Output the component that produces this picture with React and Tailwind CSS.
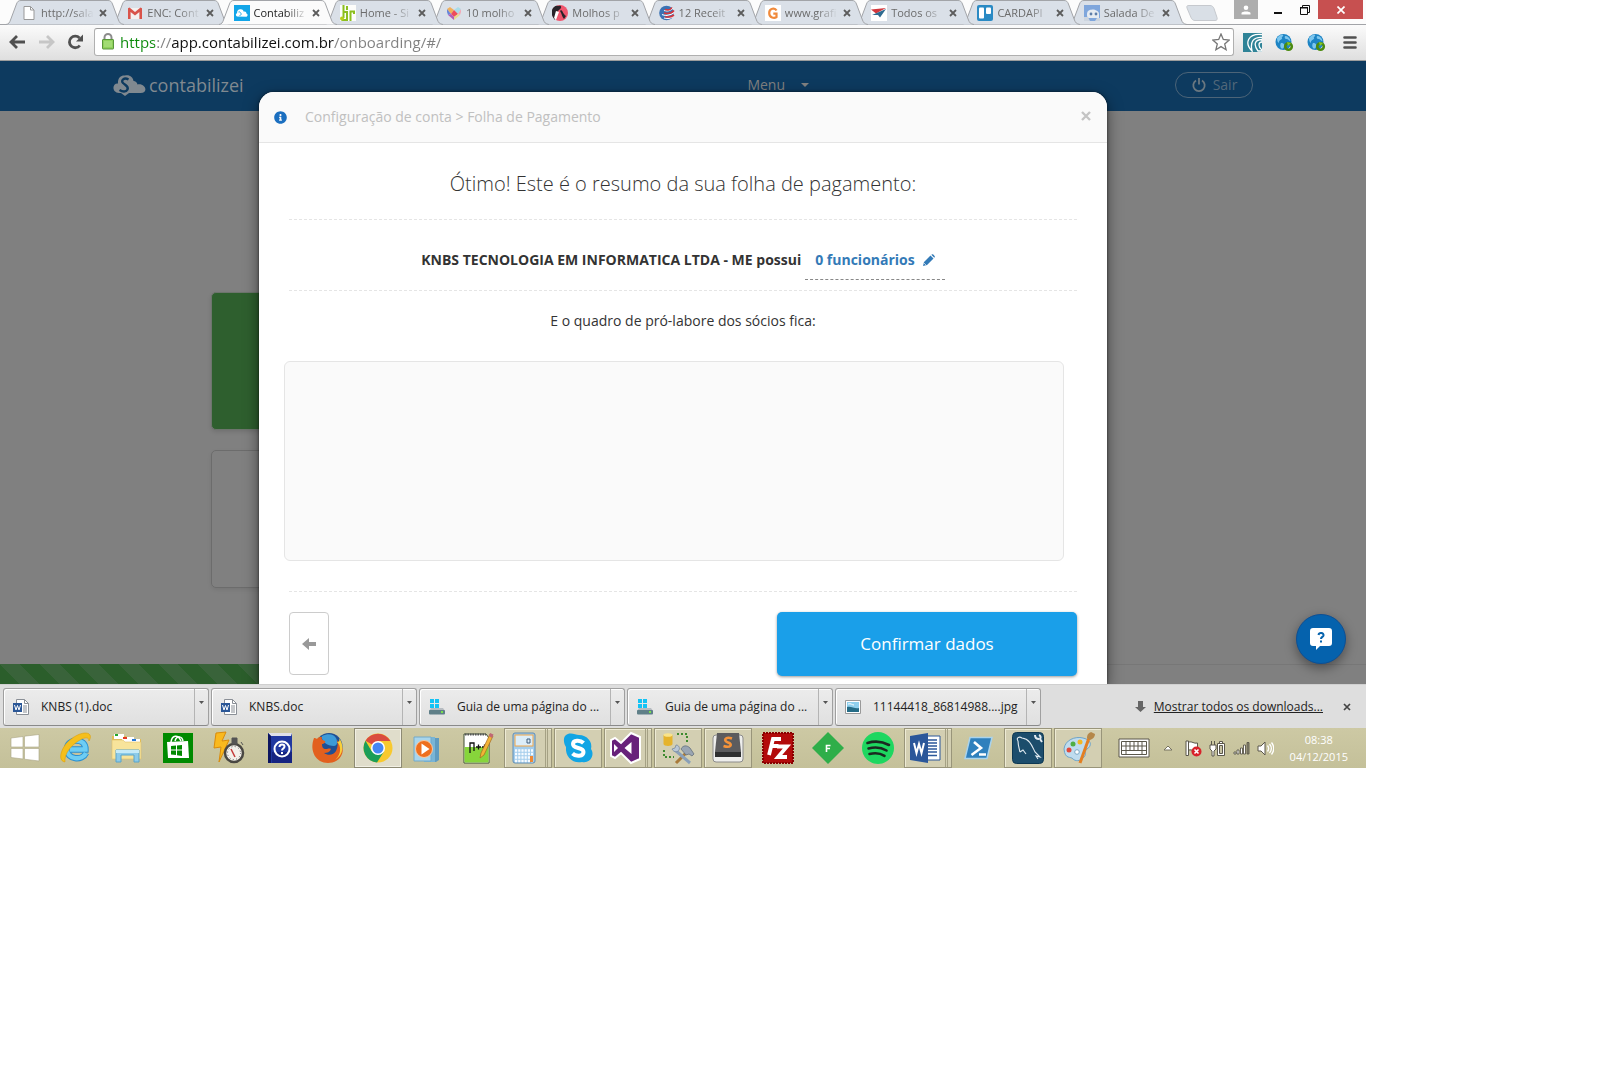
import React from "react";
import { FaInfoCircle } from "react-icons/fa";

/* ---------- favicons ---------- */
const FavPage = () => (
  <svg viewBox="0 0 16 16" className="size-4 shrink-0"><path d="M3 1.5h6.5L13 5v9.500H3z" fill="#fff" stroke="#999" /><path d="M9.500 1.500V5H13" fill="none" stroke="#999" /></svg>
);
const FavGmail = () => (
  <svg viewBox="0 0 16 16" className="size-4 shrink-0"><path d="M1 3h14v11H1z" fill="#f4f1f0" /><path d="M1 3.200v10.800h2.600V7L8 10.600 12.400 7v7H15V3.200L13.500 2.400 8 7 2.500 2.400z" fill="#d9534a" /></svg>
);
const FavCloud = () => (
  <svg viewBox="0 0 16 16" className="size-4 shrink-0"><path d="M0 0h16v16H0z" fill="#12a5e8" /><path d="M3 11.500c-1.500-.5-1.500-3 0-3.300C3 5.500 4.500 4 6.500 4.200 8.500 4 9.500 5.500 9.800 6.700c1.700-.6 2.600.7 2.600 1.700 1.500.2 1.700 2.700.1 3.300z" fill="#fff" /><path d="M4.500 7c2-.8 1.500 1 3 2l-2 2" fill="none" stroke="#12a5e8" strokeWidth=".9" /></svg>
);
const FavHr = () => (
  <svg viewBox="0 0 16 16" className="size-4 shrink-0"><path d="M0 0h16v16H0z" fill="#fdfdfa" /><path d="M3.500 0v13M3.500 7H7v8H1.500M10.500 16V6.500H14V9" fill="none" stroke="#8cbf1f" strokeWidth="2" /><path d="M6 1h2v4H6z" fill="#8cbf1f" /><circle cx="2" cy="13.500" r="2" fill="#b8ce1c" /></svg>
);
const FavHeart = () => (
  <svg viewBox="0 0 16 16" className="size-4 shrink-0">
    <path d="M1 4l3-2 4 3-3 4z" fill="#f2b05b" /><path d="M8 5l4-3 3 2-3 5z" fill="#a9dce8" />
    <path d="M1 4l4 5-3 1-1-3z" fill="#6785d8" /><path d="M5 9l3-4 4 4-4 3z" fill="#ee4c58" />
    <path d="M15 4l-3 5 2 1 1-3z" fill="#f3a9b6" /><path d="M2 10l3-1 3 3v3z" fill="#b55bb5" /><path d="M14 10l-2-1-4 3v3z" fill="#e8d88b" />
  </svg>
);
const FavChef = () => (
  <svg viewBox="0 0 16 16" className="size-4 shrink-0"><circle cx="8" cy="8" r="8" fill="#f0566e" /><path d="M0 5c1-3 4-5 6-4 4-1 4 2 1 4L4 8l-1 7C0 12-1 8 0 5z" fill="#282329" /><path d="M4 6l3 1-3 8-2-2z" fill="#fff" /><path d="M9 5c2 1 2 4 5 6l-2 3c-2-2-2-5-4-8z" fill="#282329" /></svg>
);
const FavGlobeRed = () => (
  <svg viewBox="0 0 16 16" className="size-4 shrink-0"><circle cx="7.500" cy="8" r="7.300" fill="#3a72b4" /><path d="M5 5.500c4 1 7 0 9-2.500M3 9.500c5 2 9 .5 12-2M5 13c4 1 8 0 9-2" stroke="#fff" strokeWidth="1.200" fill="none" /><path d="M6 4.500c3 1 6 0 7-2M5 8c4 1 8 0 10-2.500M6 11.500c3 1 7 0 9-1.500" stroke="#d6373c" strokeWidth="1.600" fill="none" /></svg>
);
const FavG = () => (
  <svg viewBox="0 0 16 16" className="size-4 shrink-0"><path d="M0 0h16v16H0z" fill="#fff" /><path d="M11.500 5.500C10 2.500 4.200 3 4.200 8s5.300 5.500 7.300 4V8.700H8.300" fill="none" stroke="#f08a3c" strokeWidth="2.200" /></svg>
);
const FavWing = () => (
  <svg viewBox="0 0 16 16" className="size-4 shrink-0"><path d="M0 0h16v16H0z" fill="#fff" /><path d="M0 4.500L15 3 5 8.500z" fill="#d2383e" /><path d="M1 10L15 4 9 12.500 7 10z" fill="#2f6b90" /></svg>
);
const FavTrello = () => (
  <svg viewBox="0 0 16 16" className="size-4 shrink-0"><rect width="16" height="16" rx="2" fill="#2a8ac4" /><rect x="2" y="2.500" width="5" height="11" rx="1" fill="#fff" /><rect x="9" y="2.500" width="5" height="6.500" rx="1" fill="#fff" /></svg>
);
const FavBot = () => (
  <svg viewBox="0 0 16 16" className="size-4 shrink-0"><path d="M0 0h16v16H0z" fill="#7fa6dc" /><path d="M3 9c0-4 4-4.500 6-4.500S15 6 15 9v4H5c-2 0-2-2-2-4z" fill="#e6ebf1" /><circle cx="7" cy="9" r="1.400" fill="#5d7da8" /><circle cx="12" cy="9" r="1.400" fill="#5d7da8" /><path d="M0 12h4l2 4H0zM13 13h3v3h-5z" fill="#cdd5df" /></svg>
);

const tabs = [
  { title: "http://sala", Icon: FavPage, z: "z-11" },
  { title: "ENC: Cont", Icon: FavGmail, z: "z-10" },
  { title: "Contabiliz", Icon: FavCloud, z: "z-20", active: true },
  { title: "Home - Si", Icon: FavHr, z: "z-9" },
  { title: "10 molho", Icon: FavHeart, z: "z-8" },
  { title: "Molhos p", Icon: FavChef, z: "z-7" },
  { title: "12 Receit", Icon: FavGlobeRed, z: "z-6" },
  { title: "www.grafi", Icon: FavG, z: "z-5" },
  { title: "Todos os", Icon: FavWing, z: "z-4" },
  { title: "CARDAPI", Icon: FavTrello, z: "z-3" },
  { title: "Salada De", Icon: FavBot, z: "z-2" },
];

function Tab({ title, Icon, z, active }) {
  return (
    <li className={`relative flex h-[25px] min-w-0 flex-1 items-center gap-1 pl-[15px] pr-1 ${z}`}>
      <svg viewBox="0 0 118 25" preserveAspectRatio="none" className="absolute top-0 left-0 -z-10 h-full w-[111%] overflow-visible">
        <path
          d="M0 24.500C3 24 3.500 22.500 4.500 20L10.500 4C11.500 1.500 12.500 .5 15 .5H102C104.500 .5 105.500 1.500 106.500 4L112.500 20C113.500 22.500 114.500 24 118 24.500"
          fill={active ? "#fbfbfb" : "#dae0e8"}
          stroke="#a2a4a8"
        />
      </svg>
      <Icon />
      <button
        className={`min-w-0 flex-1 text-left text-[11px] leading-6 whitespace-nowrap [mask-image:linear-gradient(to_right,black_60%,transparent)] ${active ? "text-[#222]" : "text-[#6b6b6b]"}`}
      >
        {title}
      </button>
      <button aria-label={`Fechar ${title}`} className="grid h-4 w-[10px] shrink-0 place-items-center">
        <svg viewBox="0 0 8 8" className="size-2"><path d="M1 1l6 6M7 1L1 7" stroke="#5c5c5c" strokeWidth="1.800" /></svg>
      </button>
    </li>
  );
}

function TabStrip() {
  return (
    <div className="flex h-[25px] items-start bg-[#fcfcfc] pl-1.5 shadow-[inset_0_-1px_0_#a2a4a8]">
      <ul className="isolate flex min-w-0 max-w-[1169px] flex-1">
        {tabs.map((t) => (
          <Tab key={t.title} {...t} />
        ))}
      </ul>
      <button aria-label="Nova guia" className="mt-[5px] ml-[11px]">
        <svg viewBox="0 0 32 16" className="h-4 w-8"><path d="M3 .5h21c2 0 3 1 4 3l3 9c.5 2 0 3-2 3H9c-2 0-3-1-4-3L1 3C.5 1 1 .5 3 .5z" fill="#d9dfe6" stroke="#c6c9ce" /></svg>
      </button>
      <div className="ml-auto flex">
        <button aria-label="Usuário" className="grid h-[19px] w-6 place-items-center bg-[#adadad]">
          <svg viewBox="0 0 10 10" className="size-[10px]"><circle cx="5" cy="2.800" r="2.300" fill="#fff" /><path d="M.5 9.500V8C1 6 9 6 9.500 8v1.500z" fill="#fff" /></svg>
        </button>
        <button aria-label="Minimizar" className="grid h-[19px] w-[34px] place-items-center pl-1.5">
          <svg viewBox="0 0 8 10" className="h-[10px] w-2"><path d="M0 7h8v2H0z" fill="#111" /></svg>
        </button>
        <button aria-label="Restaurar" className="grid h-[19px] w-[26px] place-items-center">
          <svg viewBox="0 0 10 10" className="size-[10px]"><path d="M2.500 2V.5h7v7H8M.5 3h7v6.500h-7z" fill="none" stroke="#111" /><path d="M0 2.500h8" stroke="#111" /></svg>
        </button>
        <button aria-label="Fechar janela" className="mr-[3px] grid h-[19px] w-[45px] place-items-center bg-[#c75050]">
          <svg viewBox="0 0 8 8" className="size-2"><path d="M.5 .5l7 7M7.500 .5l-7 7" stroke="#fff" strokeWidth="1.700" /></svg>
        </button>
      </div>
    </div>
  );
}

const GlobeExt = () => (
  <svg viewBox="0 0 19 19" className="size-[19px]">
    <circle cx="8.500" cy="9" r="8" fill="#1d84c4" />
    <path d="M2 5c2-3 5-4 6-3s-2 2-1 3-3 2-3 4-2 0-2-4zM10 3c3 0 5 2 5.500 5-2 0-2-2-4-2s-2-2-1.500-3zM6 10c3 0 4 2 3 4s-2 2-3 1-1-4 0-5z" fill="#7cc6ee" />
    <circle cx="13.500" cy="13.500" r="3.300" fill="none" stroke="#4b8a0f" strokeWidth="2.600" />
    <path d="M12 9l4 1-3 3z" fill="#86c62c" />
  </svg>
);

function Toolbar() {
  return (
    <div className="flex h-9 items-center border-b border-[#9c9c9c] bg-linear-to-b from-[#fbfbfb] to-[#dfdfdf] pr-[9px] pb-px pl-2">
      <button aria-label="Voltar" className="mr-3">
        <svg viewBox="0 0 18 16" className="h-4 w-[18px]"><path d="M17 8H3M9 2L3 8l6 6" fill="none" stroke="#505050" strokeWidth="2.800" /></svg>
      </button>
      <button aria-label="Avançar" className="mr-[11px]">
        <svg viewBox="0 0 18 16" className="h-4 w-[18px]"><path d="M1 8h13M9 2l6 6-6 6" fill="none" stroke="#c6c6c6" strokeWidth="2.800" /></svg>
      </button>
      <button aria-label="Recarregar" className="mr-2.5">
        <svg viewBox="0 0 17 16" className="h-4 w-[17px]"><path d="M12.800 11.500A5.800 5.800 0 1 1 12.500 4" fill="none" stroke="#505050" strokeWidth="2.800" /><path d="M16 .5V7.500H9z" fill="#505050" /></svg>
      </button>
      <div className="flex h-7 min-w-0 flex-1 items-center rounded-[3px] border border-[#b0b0b0] border-t-[#9a9a9a] bg-white pr-[3px] pb-px pl-1.5">
        <svg viewBox="0 0 14 17" className="h-[17px] w-[14px] shrink-0">
          <path d="M3.500 8V4.500a3.500 3.500 0 0 1 7 0V8" fill="none" stroke="#8c8c8c" strokeWidth="2" />
          <rect x="1.500" y="6.500" width="11" height="9.500" rx=".5" fill="#8fd15b" stroke="#58963b" />
          <path d="M3 9h8M3 11h8M3 13h8" stroke="#b4e68c" />
        </svg>
        <input
          aria-label="Endereço"
          defaultValue="https://app.contabilizei.com.br/onboarding/#/"
          className="ml-[5px] min-w-0 flex-1 bg-[linear-gradient(to_right,#0b8a0b_0_35px,#808080_35px_52px,#111_52px_214px,#808080_214px)] bg-clip-text text-[15px] leading-6 text-transparent outline-none"
        />
        <button aria-label="Favoritar">
          <svg viewBox="0 0 18 18" className="size-[18px]"><path d="M9 1l2.300 5.500 5.900.5-4.500 3.900 1.400 5.800L9 13.600l-5.100 3.100 1.400-5.800L.8 7l5.900-.5z" fill="#fff" stroke="#777" strokeWidth="1.300" /></svg>
        </button>
      </div>
      <div className="ml-[9px] flex items-center gap-[13px]">
        <button aria-label="Extensão de sinal">
          <svg viewBox="0 0 19 19" className="size-[19px]"><path d="M0 0h19v19H0z" fill="#2f8397" /><path d="M19 1.500C5 0 1 10 9 18c-2-9 1-14 10-13.500M19 6.500c-7 0-9 5-4 11.500h4v-1c-4-3-4-8 0-8z" fill="none" stroke="#fff" strokeWidth="1.300" /></svg>
        </button>
        <button aria-label="Extensão web 1"><GlobeExt /></button>
        <button aria-label="Extensão web 2"><GlobeExt /></button>
        <button aria-label="Menu do navegador" className="ml-1">
          <svg viewBox="0 0 14 13" className="h-[13px] w-[14px]"><path d="M1.500 1.500h11M1.500 6.500h11M1.500 11.500h11" stroke="#505050" strokeWidth="2.600" strokeLinecap="round" /></svg>
        </button>
      </div>
    </div>
  );
}

/* ---------- dimmed page behind the dialog ---------- */
function Backdrop() {
  return (
    <div className="col-start-1 row-start-1 flex flex-col bg-[#808080]">
      <header className="flex h-[50px] shrink-0 items-center bg-[#0d3a5f] px-[113px] pb-0.5">
        <a href="#/" className="flex items-center gap-[3px] text-[#808990]">
          <svg viewBox="0 0 33 22" className="h-[22px] w-[33px]">
            <path d="M6 19C-1.500 18.500-1 9 5 9.500 4.500 4 8 1 12 1.500 17 .5 20 3.500 20.500 7c2 0 3.500 1.500 4 3.500 8-1.500 11.500 8.500 3 8.500H16l-4 3-4-3z" fill="#808990" />
            <path d="M15.500 5.500C11 3 7.500 6.500 10 9s6 3.500 4.500 6.500-5.500 2-8 .5" fill="none" stroke="#0d3a5f" strokeWidth="2.400" />
          </svg>
          <span className="text-[18px] leading-6">contabilizei</span>
        </a>
        <button className="mr-[366px] ml-auto flex items-center gap-4 text-[14px] leading-5 text-[#808080]">
          Menu
          <svg viewBox="0 0 8 4" className="h-1 w-2"><path d="M0 0h8L4 4z" fill="currentColor" /></svg>
        </button>
        <button className="flex h-[26px] w-[78px] items-center justify-center gap-1.5 rounded-full border border-[#4c6478] pb-px text-[14px] text-[#52687a]">
          <svg viewBox="0 0 16 16" className="size-4"><path d="M5 3.500a5.700 5.700 0 1 0 6 0M8 1v6.500" fill="none" stroke="#6b7880" strokeWidth="1.800" /></svg>
          Sair
        </button>
      </header>
      <div className="flex w-1/2 flex-1 flex-col gap-5 pt-[181px] pl-[211px]">
        <div className="h-[138px] rounded-[5px] border border-[#6d756d] bg-[#2e5f2e] shadow-[0_2px_4px_rgba(0,0,0,0.12)]" />
        <div className="h-[138px] rounded-[5px] border border-[#6c6c6c] shadow-[0_2px_4px_rgba(0,0,0,0.08)]" />
      </div>
      <footer className="flex h-5 shrink-0">
        <div className="w-1/2 bg-[repeating-linear-gradient(45deg,#2b5e2b_0_14px,#39633a_14px_28px)]" />
        <div className="flex-1 border-t border-[#777]" />
      </footer>
    </div>
  );
}

function Dialog() {
  return (
    <section role="dialog" aria-label="Folha de Pagamento" className="z-10 col-start-1 row-start-1 mt-[31px] w-full max-w-[848px] justify-self-center rounded-t-[15px] bg-white shadow-[0_5px_15px_rgba(0,0,0,0.5),0_0_3px_rgba(0,0,0,0.6)]">
      <header className="flex h-[51px] items-center rounded-t-[15px] border-b border-[#e5e5e5] bg-[#fafafa] px-[15px]">
        <FaInfoCircle className="size-[13px] text-[#1b6fc0]" />
        <h1 className="ml-[18px] text-[14px] leading-5 text-[#c0c0c0]">Configuração de conta &gt; Folha de Pagamento</h1>
        <button aria-label="Fechar" className="mr-px ml-auto pb-0.5 text-[#c4c4c4]">
          <svg viewBox="0 0 10 10" className="size-[10px]"><path d="M1 1l8 8M9 1L1 9" stroke="currentColor" strokeWidth="2.400" /></svg>
        </button>
      </header>
      <div className="px-[30px] pb-2 text-center text-[14px] leading-5 text-[#333]">
        <h2 className="border-b border-dashed border-[#e5e5e5] pt-[26px] pb-[20px] text-[20px] leading-[30px] font-light">
          Ótimo! Este é o resumo da sua folha de pagamento:
        </h2>
        <p className="flex items-start justify-center gap-1 border-b border-dashed border-[#e5e5e5] pt-[30px] pb-2.5 font-bold">
          <span>KNBS TECNOLOGIA EM INFORMATICA LTDA - ME possui</span>
          <a href="#/funcionarios" className="flex items-center gap-2 border-b border-dashed border-[#888] px-[10px] pb-[9px] text-[#337ab7]">
            0 funcionários
            <svg viewBox="0 0 12 12" className="size-3"><path d="M0 12l1-4 6.500-6.500 3 3L4 11zM8.300 .8C9 0 9.700 0 10.300 .6l1.100 1.100c.6.6.6 1.300-.1 2z" fill="currentColor" /><path d="M1.200 9.200l1.600 1.600" stroke="#fff" strokeWidth=".8" /></svg>
          </a>
        </p>
        <p className="pt-5">E o quadro de pró-labore dos sócios fica:</p>
        <div className="mt-[30px] mr-[13px] -ml-[5px] h-[200px] rounded-md border border-[#e5e5e5] bg-[#fafafa]" />
        <div className="mt-[30px] flex items-start justify-between border-t border-dashed border-[#e5e5e5] pt-5">
          <button aria-label="Voltar etapa" className="grid h-[63px] w-10 place-items-center rounded border border-[#ccc] bg-white">
            <svg viewBox="0 0 14 12" className="h-3 w-[14px]"><path d="M0 6l7-6v4h7v4H7v4z" fill="#999" /></svg>
          </button>
          <button className="h-16 w-[300px] rounded-[5px] bg-[#1a9fe9] text-[17px] text-white shadow-[0_1px_3px_rgba(0,0,0,0.4)]">Confirmar dados</button>
        </div>
      </div>
    </section>
  );
}

/* ---------- downloads shelf ---------- */
const DocIcon = () => (
  <svg viewBox="0 0 16 16" className="size-4"><path d="M3.500 .5h8l4 4v11h-12z" fill="#fff" stroke="#8a8f96" /><path d="M11.500 .5v4h4M10 7h4M10 9h4M10 11h4M10 13h4" fill="none" stroke="#8a8f96" /><path d="M0 4h9v9H0z" fill="#2b5797" /><path d="M1.500 6l1.500 5 1.500-4.500L6 11l1.500-5" fill="none" stroke="#fff" /></svg>
);
const DriveIcon = () => (
  <svg viewBox="0 0 16 16" className="size-4"><path d="M1 0h4v4H1zM6 0h4v4H6zM1 5h4v4H1zM6 5h4v4H6z" fill="#12c3f5" /><path d="M2 9h12l2 3H0z" fill="#b7bcc1" /><rect y="11" width="16" height="4.500" rx="1" fill="#5f7f88" /><path d="M12 12h2v2h-2z" fill="#79e04c" /></svg>
);
const ImgIcon = () => (
  <svg viewBox="0 0 16 14" className="h-[14px] w-4"><path d="M.5 .5h15v13H.5z" fill="#fff" stroke="#999" /><path d="M2 2h12v10H2z" fill="#8fd0ee" /><path d="M2 7c4-1 8 2 12 1v4H2z" fill="#256c86" /><path d="M3 4c3-1 4 1 6 1" stroke="#fff" fill="none" /></svg>
);
const files = [
  { name: "KNBS (1).doc", Icon: DocIcon },
  { name: "KNBS.doc", Icon: DocIcon },
  { name: "Guia de uma página do ...", Icon: DriveIcon },
  { name: "Guia de uma página do ...", Icon: DriveIcon },
  { name: "11144418_86814988....jpg", Icon: ImgIcon },
];

function Downloads() {
  return (
    <div className="flex h-11 items-center gap-0.5 border-t border-[#d0d0d0] bg-[#dedede] pr-[15px] pl-[3px] text-[12px] text-[#222]">
      {files.map(({ name, Icon }, i) => (
        <div key={i} className="flex h-[38px] w-[206px] min-w-0 rounded-[3px] border border-[#a0a0a0] border-b-[#8a8a8a] bg-linear-to-b from-[#ececec] to-[#e0e0e0] shadow-[inset_1px_1px_0_#fff]">
          <button className="flex min-w-0 flex-1 items-center gap-3 pl-[9px] text-left whitespace-nowrap">
            <Icon />
            {name}
          </button>
          <button aria-label={`Opções de ${name}`} className="flex w-[14px] justify-center border-l border-[#b4b4b4] pt-3">
            <svg viewBox="0 0 5 3" className="h-[3px] w-[5px]"><path d="M0 0h5L2.500 3z" fill="#555" /></svg>
          </button>
        </div>
      ))}
      <a href="#downloads" className="ml-auto flex items-center gap-2 whitespace-nowrap underline">
        <svg viewBox="0 0 11 11" className="size-[11px]"><path d="M3 0h5v6h3l-5.500 5L0 6h3z" fill="#666" /></svg>
        Mostrar todos os downloads...
      </a>
      <button aria-label="Fechar downloads" className="ml-[18px]">
        <svg viewBox="0 0 8 8" className="size-2"><path d="M1 1l6 6M7 1L1 7" stroke="#444" strokeWidth="1.700" /></svg>
      </button>
    </div>
  );
}

/* ---------- taskbar icons ---------- */
const Ico = ({ children }) => <svg viewBox="0 0 32 32" className="size-8 shrink-0 overflow-visible">{children}</svg>;
const startGroup = [
  ["Iniciar", <Ico><path d="M2 6l12-1.500V15H2zM15.500 4.200L30 2.500V15H15.500zM2 16.500h12V27L2 25.500zM15.500 16.500H30V29l-14.500-1.800z" fill="#fff" stroke="#aaa584" strokeWidth=".6" /></Ico>],
  ["Internet Explorer", <Ico><path d="M26 21c-3.500 8-19 7-19-4S26 5 25.500 17.500H10" fill="none" stroke="#2a8fd0" strokeWidth="6.400" /><path d="M26 21c-3.500 8-19 7-19-4S26 5 25.500 17.500H10" fill="none" stroke="#6dcdf4" strokeWidth="4.400" /><path d="M5 30C-3 29 1 15 10 8 18 1 28-1 30 3c1 2 0 4-1 6 0-4-4-4-9-1C11 13 4 22 5 30z" fill="#f5bf1c" stroke="#dca00e" strokeWidth=".6" /></Ico>],
  ["Explorador de Arquivos", <Ico><path d="M1 4h14l2 3h13v20H1z" fill="#e2bb55" /><path d="M3 2h10v5H3z" fill="#fff" /><path d="M4 2h3v2H4z" fill="#23a62c" /><path d="M11 5h12v5H11zM20 7h9v4h-9z" fill="#fff" /><path d="M12 5h4v2h-4z" fill="#e23a22" /><path d="M21 7h4v2h-4z" fill="#2878d6" /><path d="M1 8h11l2 2h16v17H1z" fill="#f8e49b" stroke="#dfc06a" strokeWidth=".6" /><path d="M5 30V18h23v12h-5v-7H10v7z" fill="#8ccbe9" stroke="#5ba4ca" /><path d="M5 18h23v3H5z" fill="#c5eaf8" /></Ico>],
  ["Loja", <Ico><path d="M1 1h30v30H1z" fill="#008a00" /><path d="M5 10l21-1 1 17-21 0z" fill="#fff" /><path d="M9 10c1-7 7-8 10-1M13 9c2-6 7-5 8 0" fill="none" stroke="#fff" strokeWidth="1.500" /><path d="M9 14l5-.5v4H9zM15 13.400l5-.5v4.600h-5zM9 18.500h5V23l-5-.5zM15 18.500h5V24l-5-.8z" fill="#008a00" /></Ico>],
  ["Agendador", <Ico><path d="M3 1L13 0 9 9l7-1L6 30l2-15-7 1z" fill="#f9b91e" stroke="#d98b0b" /><circle cx="21" cy="21" r="9" fill="#f3f0eb" stroke="#494742" strokeWidth="2.500" /><path d="M19 6h5v6h-5zM28 10l2 3" fill="#555" stroke="#555" /><circle cx="21" cy="21" r="6.500" fill="none" stroke="#666" strokeDasharray="1 2.400" /><path d="M18 17l4 8" stroke="#c43b3b" strokeWidth="1.500" /></Ico>],
  ["Ajuda", <Ico><path d="M4 1h24v30H4z" fill="#2038a0" /><path d="M4 1h24l-1 3H7z" fill="#dfe0e8" /><path d="M4 1l3 3v27H4z" fill="#0c1560" /><path d="M8 20h20v11H8z" fill="#11186c" opacity=".6" /><circle cx="18" cy="17" r="7.500" fill="none" stroke="#fff" strokeWidth="2" /><path d="M15.500 15c0-3.500 5-3 5-.5 0 2-2.500 2-2.500 4M18 20v2" fill="none" stroke="#fff" strokeWidth="2" /></Ico>],
];
const Boxed = "border-[#99957a] bg-[#d3cfb2] shadow-[inset_1px_1px_0_#eeebd5]";
const apps = [
  ["Firefox", 0, <Ico><circle cx="17" cy="14.500" r="13.500" fill="#1f4f94" /><path d="M10 4c6-3 12-2 14 2s1 8-2 8-7-1-9-3-4-5-3-7z" fill="#3c9bd8" /><path d="M2 6c1 0 2 0 3 1 1-2 3-2 5-2-1 2 0 3 3 4 1 1-1 3-3 3 0 3 1 5 4 5 2 0 3-1 5 0-1 3-4 4-7 4 4 3 10 2 12-2 2-4 2-8 1-11 5 5 7 9 5 14-2 6-8 9-14 9C4 31-3 19 2 6z" fill="#e2601e" /><path d="M27 6c5 6 5 17-4 22 7-6 6-15 2-18 2 0 3-1 2-4z" fill="#f8cf3a" /></Ico>],
  ["Chrome", 3, <Ico><circle cx="16" cy="16" r="14.500" fill="#f8c92e" /><path d="M16 16L3.500 8.700A14.500 14.500 0 0 1 28.500 9H16z" fill="#da4c3f" /><path d="M3.500 8.700A14.500 14.500 0 0 0 15 30.500L22 19.500 16 16 9.500 19z" fill="#1b9e58" /><circle cx="16" cy="16" r="7" fill="#fff" /><circle cx="16" cy="16" r="5.500" fill="#4587f3" /></Ico>],
  ["Media Player", 0, <Ico><path d="M15 6h12v22l-3 2H15z" fill="#5f9bc0" /><path d="M12 5h11v25H12z" fill="#79b5d6" /><path d="M2 5h17v24H2z" fill="#a8d5ec" stroke="#72a9c8" /><circle cx="12" cy="17" r="8.500" fill="#ee6f1e" stroke="#f9c9a1" /><path d="M9.500 11.500l8 5.500-8 5.500z" fill="#fff" /></Ico>],
  ["Notepad++", 0, <Ico><path d="M2 2h22l3 4v25H2z" fill="#fff" stroke="#3f4f35" /><path d="M2.500 15h24v15.500h-24z" fill="#87d53b" /><path d="M3 2.500h21" stroke="#555" strokeWidth="2" strokeDasharray="1.500 1" /><path d="M8 21v-10h4v8M14 15h5M16.500 12.500v5M20 15h5M22.500 12.500v5" fill="none" stroke="#111" strokeWidth="1.300" /><path d="M28 2l3 2-9 19-4 3 1-5z" fill="#f2b336" stroke="#a5691f" strokeWidth=".7" /><path d="M28 1l3.500 1.500-1.500 3.500-3-2z" fill="#c06874" /></Ico>],
  ["Calculadora", 2, <Ico><rect x="4" y="1" width="22" height="30" rx="2" fill="#a3cdec" stroke="#5e8cb4" /><rect x="6" y="3" width="18" height="11" fill="#dcedf8" stroke="#f2a545" /><path d="M18 7h3v4h-3z" fill="none" stroke="#3e5c7c" /><path d="M6 18.500h18M6 22h18M6 25.500h18M6 29h18" stroke="#f7fbff" strokeWidth="2.400" strokeDasharray="2.200 1" /><path d="M21 24h3v6h-3z" fill="#ed8936" /></Ico>],
  ["Skype", 1, <Ico><path d="M3 4c5-5 10-1 14-1 8 0 14 7 12 14 4 5 0 15-9 13C11 32 3 25 4 15c-2-3-3-8-1-11z" fill="#12a5e4" /><path d="M21.500 11C18 7.500 11 8 11 12c0 5.500 10.500 2.500 10.500 8 0 4.500-7.500 5-11 1.500" fill="none" stroke="#fff" strokeWidth="4" /></Ico>],
  ["Visual Studio", 2, <Ico><path d="M22 1l9 4v22l-9 4-10-10-6 5-4-2V8l4-2 6 5z" fill="#68217a" stroke="#fff" strokeWidth="2" /><path d="M22.500 10v12l-7-6zM5 12l4 4-4 4z" fill="#fff" /></Ico>],
  ["Ferramentas", 1, <Ico><path d="M1.500 3v9c0 2.500 9 2.500 9 0V3z" fill="#e5b32c" /><ellipse cx="6" cy="3" rx="4.500" ry="1.800" fill="#f9e38a" /><path d="M15 2h10v10M2 18v7h10" fill="none" stroke="#3e8a2f" strokeWidth="2" strokeDasharray="2 2" /><path d="M14 31L25 20" stroke="#a97a3a" strokeWidth="3" /><path d="M13 18l15 13" stroke="#8aa0b8" strokeWidth="3" /><path d="M10 17l3-1 1-3c3 0 4 3 3 5s-5 3-7-1z" fill="#b8c6d6" stroke="#6d8199" strokeWidth=".7" /><path d="M19 17c2-4 6-4 9-1l4 6-2 2-3-2-3 1z" fill="#9aa5b2" stroke="#5d6874" strokeWidth=".7" /></Ico>],
  ["Sublime Text", 1, <Ico><rect x="1" y="3" width="30" height="27" rx="3" fill="#eeeeec" stroke="#8c8c8c" /><path d="M5 1h22l2 19H3z" fill="#5c5c5e" /><path d="M3 20h26v5H3z" fill="#2f3031" /><path d="M20 6.500c-7-2.500-9 2.500-4 4 5 1.500 3 6-4.500 3.500" fill="none" stroke="#f4933a" strokeWidth="2.600" /></Ico>],
  ["FileZilla", 0, <Ico><path d="M1 1h30v30H1z" fill="#b30b0b" stroke="#8a0000" strokeDasharray="2 1" strokeWidth="2" /><path d="M19 7h-8L7 23M9.500 14h7M15 14.500h10L16 25h9" fill="none" stroke="#fff" strokeWidth="3.800" /></Ico>],
  ["Forge", 0, <Ico><path d="M16 0l16 16-16 16L0 16z" fill="#2fae49" /><path d="M18.500 13.500h-4V20M14.500 16.500h3.500" fill="none" stroke="#fff" strokeWidth="1.600" /></Ico>],
  ["Spotify", 0, <Ico><circle cx="16" cy="16" r="16" fill="#1ed760" /><path d="M5.500 11c8-2.500 15-1.500 21.500 2M6.500 16.500c7-2 13-1 18 2M7.500 22c6-1.500 10.500-1 15 1.800" fill="none" stroke="#1b2a20" strokeWidth="2.600" strokeLinecap="round" /></Ico>],
  ["Word", 2, <Ico><path d="M15 4h16v24H15z" fill="#fff" stroke="#2b579a" /><path d="M19 8h9M19 11h9M19 14h9M19 17h9M19 20h9M19 23.500h9" stroke="#2b579a" strokeWidth="1.500" /><path d="M1 4l18-3v30L1 28z" fill="#2b579a" /><path d="M5 11l2.500 10L10 12l2.500 9L15 11" fill="none" stroke="#fff" strokeWidth="2" /></Ico>],
  ["PowerShell", 0, <Ico><path d="M8 5.500h22l-5 21H3z" fill="#2f80bd" stroke="#a9d3ec" strokeWidth="1.500" /><path d="M12 10l7 6-9.500 7M17 22.500h7" fill="none" stroke="#fff" strokeWidth="2.600" /></Ico>],
  ["MySQL Workbench", 1, <Ico><rect x=".5" y=".5" width="31" height="31" rx="4" fill="#1c4d6c" stroke="#0e3852" /><path d="M8 20c-1-4-2-7-2-11-2-3 1-5 4-3 8 1 10 8 13 14l5 5-4-1 2 3M8 20l3-2 3 4" fill="none" stroke="#e2ebf1" strokeWidth="1.100" /><path d="M23 3c0 3 2 4 4 4M27 3c2 1 2 3 1 4l2 3" fill="none" stroke="#e2ebf1" strokeWidth="2" /></Ico>],
  ["Paint", 1, <Ico><path d="M2 17C3 8 13 4 21 6c9 2 9 8 4 11-3 2 0 5-3 8-4 5-9 4-11 2-2-3-8 1-9-10z" fill="#bfdcee" stroke="#6ea4c8" /><circle cx="7" cy="18" r="2.500" fill="#e24a3b" /><circle cx="11" cy="12" r="2.500" fill="#4fae42" /><circle cx="18" cy="10" r="2.500" fill="#f2b824" /><circle cx="15" cy="20" r="2.300" fill="#fff" stroke="#7ba8c4" /><path d="M27 6L18 31" stroke="#e37f22" strokeWidth="3" /><path d="M25 6c0-4 2-5 4-6l4 2c0 3-2 5-5 6z" fill="#b5874a" /></Ico>],
];

function AppButton({ name, state, icon }) {
  const frame = state === 0 ? "border-transparent" : state === 3 ? "border-[#8d8a74] bg-[#e0ddcb] shadow-[inset_0_0_0_1px_#f2f0e4]" : Boxed;
  return (
    <button aria-label={name} className={`flex h-10 w-12 shrink-0 items-center justify-center border ${frame}`}>
      {icon}
      {state === 2 && <span className="ml-1 h-full w-[3px] shrink-0 border-x border-[#a5a184]" />}
    </button>
  );
}

function Tray() {
  return (
    <div className="mr-[18px] ml-auto flex shrink-0 items-center">
      <button aria-label="Teclado"><svg viewBox="0 0 32 20" className="h-5 w-8"><path d="M1 1h30v18H1z" fill="#fff" stroke="#5a574b" /><path d="M3.500 3.500h25v13h-25zM3.500 8h25M3.500 12.500h25M8 3.500v9M12 3.500v9M16 3.500v9M20 3.500v9M24 3.500v9M8 12.500v4M24 12.500v4" fill="none" stroke="#5a574b" /></svg></button>
      <button aria-label="Mostrar ícones ocultos" className="ml-[13px]"><svg viewBox="0 0 10 6" className="h-1.5 w-[10px]"><path d="M1 5l4-4 4 4z" fill="#fff" stroke="#777360" /></svg></button>
      <button aria-label="Central de ações" className="ml-3"><svg viewBox="0 0 17 17" className="size-[17px]"><path d="M1 1h2.500v14.500H1z" fill="#fff" stroke="#5a574b" /><path d="M3.500 2c4-1 5 2 9 1v8c-4 1-5-2-9-1z" fill="#fff" stroke="#5a574b" /><circle cx="11.500" cy="11.500" r="5" fill="#d8222a" /><path d="M9.500 9.500l4 4M13.500 9.500l-4 4" stroke="#fff" strokeWidth="1.600" /></svg></button>
      <button aria-label="Bateria" className="ml-[7px]"><svg viewBox="0 0 17 17" className="size-[17px]"><path d="M8.500 3.500h7v12h-7zM10.500 1.500h3v2h-3z" fill="#fff" stroke="#5a574b" /><path d="M10.500 5.500h3v8h-3z" fill="#c9c5a5" stroke="#5a574b" /><path d="M2.500 1v4M5.500 1v4M1 5h6v4L5 11v5H3v-5L1 9z" fill="#fff" stroke="#5a574b" /></svg></button>
      <button aria-label="Rede" className="ml-[7px]"><svg viewBox="0 0 17 14" className="h-[14px] w-[17px]"><path d="M1 11h2v2H1zM4 9h2v4H4zM7.500 7h2v6h-2zM10.500 4h2v9h-2z" fill="#fff" stroke="#5a574b" strokeWidth=".9" /><path d="M14 1.500h2V13h-2z" fill="#8a8670" stroke="#5a574b" strokeWidth=".9" /></svg></button>
      <button aria-label="Volume" className="ml-[7px]"><svg viewBox="0 0 17 15" className="h-[15px] w-[17px]"><path d="M1 5h3l4-4v13L4 10H1z" fill="#fff" stroke="#5a574b" /><path d="M10.500 4.500c1.500 2 1.500 4 0 6M12.500 3c2.500 3 2.500 6 0 9M14.500 1.500c3 4 3 8 0 12" fill="none" stroke="#fff" strokeWidth="1.300" /></svg></button>
      <time dateTime="2015-12-04T08:38" className="ml-[16px] text-center text-[11px] leading-[17px] text-white">08:38<br />04/12/2015</time>
    </div>
  );
}

function Taskbar() {
  return (
    <footer className="flex h-10 items-center bg-linear-to-b from-[#cdc9a4] to-[#c4c099] pl-px">
      <div className="flex gap-[3px]">
        {startGroup.map(([name, icon]) => <AppButton key={name} name={name} state={0} icon={icon} />)}
      </div>
      <div className="flex gap-0.5">
        {apps.map(([name, state, icon]) => <AppButton key={name} name={name} state={state} icon={icon} />)}
      </div>
      <Tray />
    </footer>
  );
}

export default function App() {
  return (
    <div className="min-h-screen bg-white font-['Open_Sans',sans-serif]">
      <main className="w-full max-w-[1366px]">
        <TabStrip />
        <Toolbar />
        <div className="relative grid overflow-hidden">
          <Backdrop />
          <Dialog />
          <button aria-label="Ajuda on-line" className="absolute right-5 bottom-5 z-20 grid size-[50px] place-items-center rounded-full border border-[#0d4f94] bg-[#0562ad] shadow-[0_4px_12px_rgba(0,0,0,0.4)]">
            <svg viewBox="0 0 22 22" className="size-[22px]"><path d="M3 0h16a3 3 0 0 1 3 3v12a3 3 0 0 1-3 3h-9l-4 4v-4H3a3 3 0 0 1-3-3V3a3 3 0 0 1 3-3z" fill="#fff" /><path d="M8.500 7c.5-3 5.500-2.500 5 .5-.3 1.500-2.500 1.500-2.500 3.500M11 12.500v2" fill="none" stroke="#0562ad" strokeWidth="2" /></svg>
          </button>
        </div>
        <Downloads />
        <Taskbar />
      </main>
    </div>
  );
}
